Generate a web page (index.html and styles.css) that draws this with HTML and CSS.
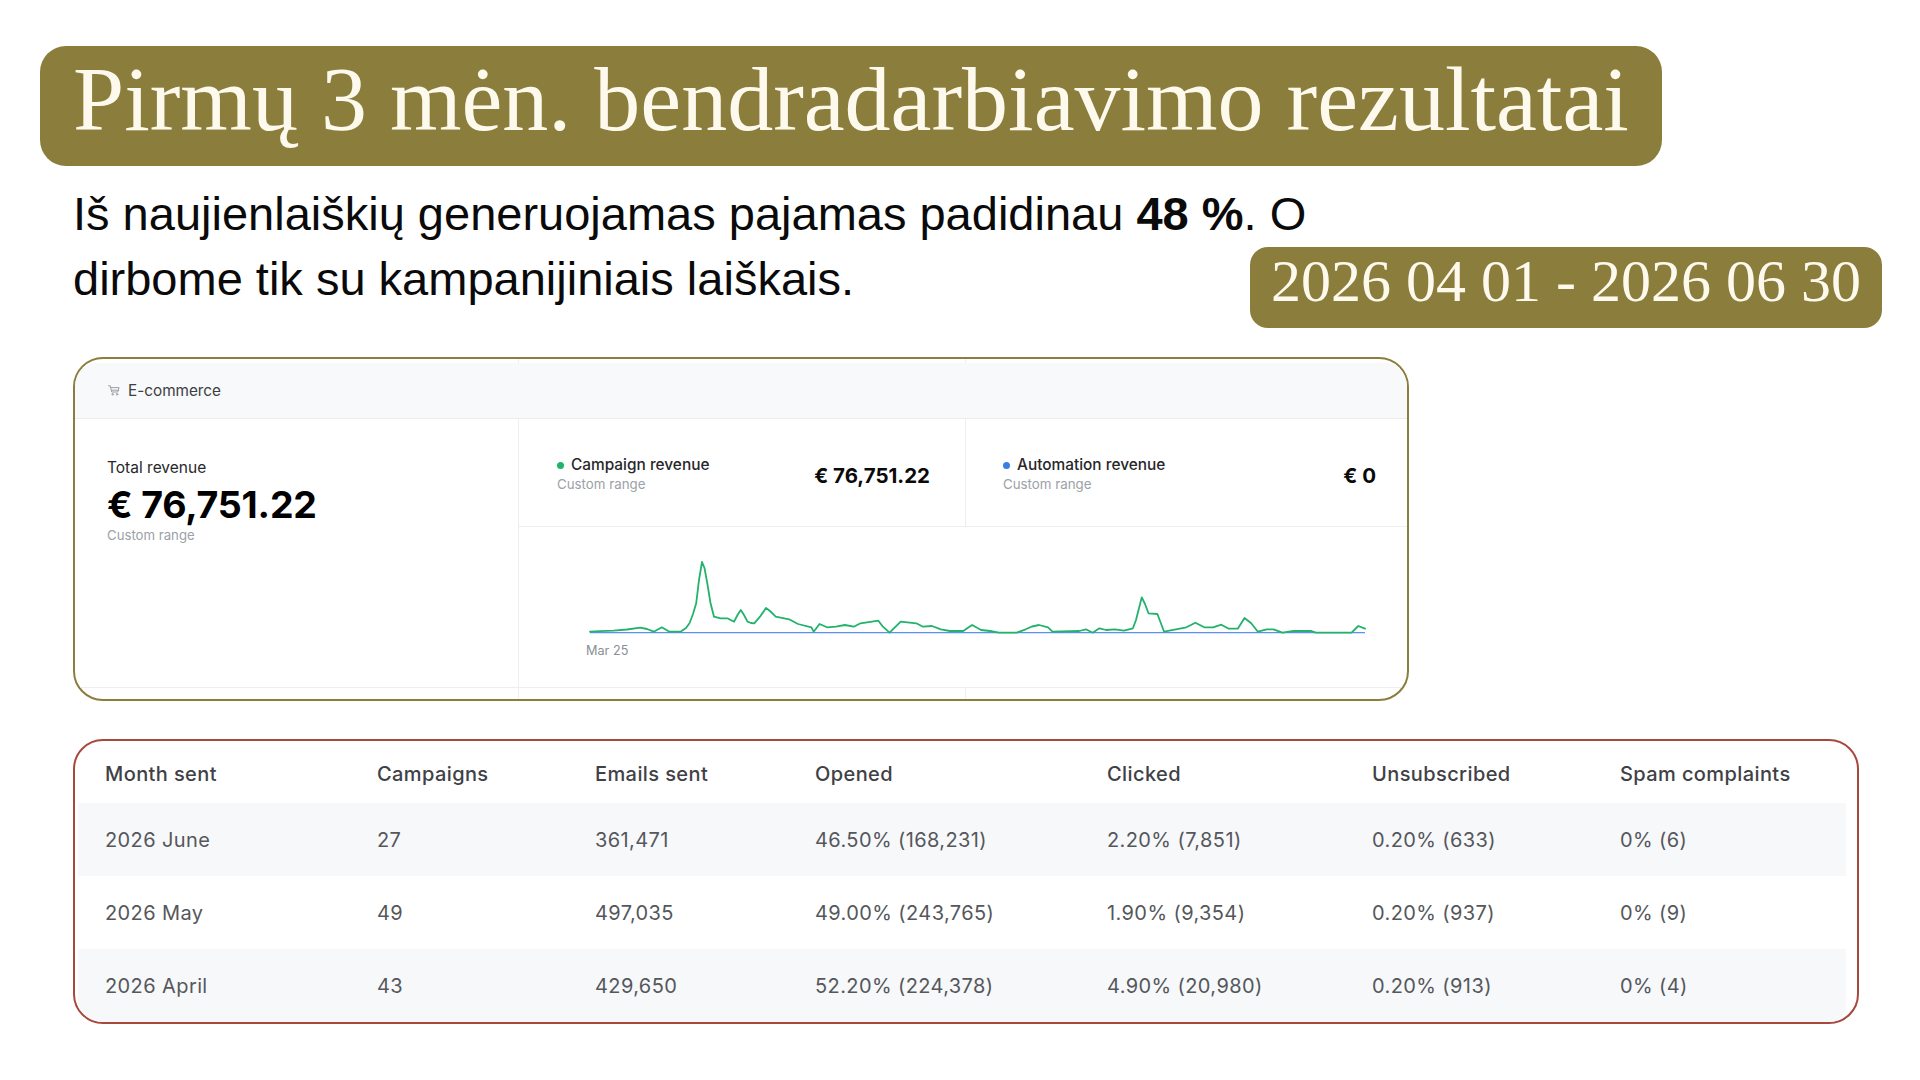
FILE: index.html
```html
<!DOCTYPE html>
<html lang="lt">
<head>
<meta charset="utf-8">
<title>Pirmų 3 mėn. bendradarbiavimo rezultatai</title>
<link rel="stylesheet" href="styles.css">
</head>
<body>
<div class="page">
  <h1 class="title">Pirmų 3 mėn. bendradarbiavimo rezultatai</h1>
  <div class="intro">
    <p class="lead"><span>Iš naujienlaiškių generuojamas pajamas padidinau <b>48&nbsp;%</b>.&nbsp;O</span><br><span>dirbome tik su kampanijiniais laiškais.</span></p>
    <div class="period">2026 04 01 - 2026 06 30</div>
  </div>

  <section class="ecom">
    <div class="strip"><span></span><span></span><span></span></div>
    <div class="ec-head">
      <svg class="cart" width="12" height="11" viewBox="0 0 12 11" fill="none" stroke="#9aa0a6" stroke-width="1" stroke-linecap="round" stroke-linejoin="round">
        <path d="M0.5 0.8h1.8l1.4 6.2h6l1.4-4.4H2.9"/>
        <path d="M3.9 5.2h6.6"/>
        <circle cx="4.6" cy="9.3" r="0.8"/>
        <circle cx="9" cy="9.3" r="0.8"/>
      </svg>
      <span>E-commerce</span>
    </div>
    <div class="ec-body">
      <div class="total">
        <div class="t-label">Total revenue</div>
        <div class="t-value">€ 76,751.22</div>
        <div class="sub">Custom range</div>
      </div>
      <div class="ec-right">
        <div class="metrics">
          <div class="metric m1">
            <div class="m-text">
              <div class="m-label"><i class="dot green"></i>Campaign revenue</div>
              <div class="sub">Custom range</div>
            </div>
            <div class="m-value">€ 76,751.22</div>
          </div>
          <div class="metric m2">
            <div class="m-text">
              <div class="m-label"><i class="dot blue"></i>Automation revenue</div>
              <div class="sub">Custom range</div>
            </div>
            <div class="m-value">€ 0</div>
          </div>
        </div>
        <div class="chart">
          <svg class="chart-svg" width="888" height="160" viewBox="519 527 888 160">
            <line x1="590" y1="632.7" x2="1365" y2="632.7" stroke="#5b8ff0" stroke-width="1.2"/>
            <polyline fill="none" stroke="#22b26c" stroke-width="1.8" stroke-linejoin="round" stroke-linecap="round"
              points="590,631.7 600,631.2 613.6,630.7 627,629.5 640.4,627.7 647,629 653.8,631.7 661.8,627.3 669.4,631.7 680.5,631.7 686,628 689.5,623.3 693,614 696.2,603.3 699,580 702,562 704.5,568 707.3,583.3 710.5,603 714,616.7 720.7,618.3 727.4,618.3 734.1,621.7 737.5,615 740.8,610 744,615 747.5,621.7 751,623 754.2,623.3 760,616.7 766,608 770,611 775.7,616.7 789.1,619.3 798,624 811.4,627.3 813.7,631.7 819.5,624 827,627.3 836,626.7 844.9,625 853.8,626.7 860.5,623.3 878.4,620.7 882.9,626.7 889.6,632.7 900.7,621.7 916.3,623.3 923,626.7 932,626 940.9,629.3 949.8,631 963.2,631 972.1,625 981.1,630 990,631 998.9,632.7 1016.8,632.7 1025.7,629.3 1032,626.5 1039.1,625 1048,627.3 1052.5,631.7 1079.3,631 1086,629.3 1092.7,632.7 1099.4,628.3 1106.1,630 1115,629.3 1123.9,630.7 1132.9,628.3 1136,620 1141.8,597.3 1145,604 1148.5,613.3 1157.4,614 1164.1,631.7 1186.4,627.3 1195.4,622.7 1204.3,627.3 1213.2,627.3 1221.3,624.7 1228.8,628.7 1237.8,628.7 1244.5,618 1251.2,623.3 1257.9,631.7 1266.8,629.3 1273.5,629.3 1282.4,632.7 1293.6,631 1311.4,631 1315.9,632.7 1351.6,632.7 1358.3,626 1365,628.7"/>
          </svg>
          <span class="axis">Mar 25</span>
        </div>
      </div>
    </div>
    <div class="strip bottom"><span></span><span></span><span></span></div>
  </section>

  <section class="stats">
    <div class="tbl">
      <div class="row head">
        <span>Month sent</span><span>Campaigns</span><span>Emails sent</span><span>Opened</span><span>Clicked</span><span>Unsubscribed</span><span>Spam complaints</span>
      </div>
      <div class="row shade">
        <span>2026 June</span><span>27</span><span>361,471</span><span>46.50% (168,231)</span><span>2.20% (7,851)</span><span>0.20% (633)</span><span>0% (6)</span>
      </div>
      <div class="row">
        <span>2026 May</span><span>49</span><span>497,035</span><span>49.00% (243,765)</span><span>1.90% (9,354)</span><span>0.20% (937)</span><span>0% (9)</span>
      </div>
      <div class="row shade">
        <span>2026 April</span><span>43</span><span>429,650</span><span>52.20% (224,378)</span><span>4.90% (20,980)</span><span>0.20% (913)</span><span>0% (4)</span>
      </div>
    </div>
  </section>
</div>
</body>
</html>
```

FILE: styles.css
```css
* { box-sizing: border-box; }

html, body {
  margin: 0;
  padding: 0;
  background: #ffffff;
}

body {
  width: 1920px;
  height: 1080px;
  overflow: hidden;
  font-family: "Liberation Sans", Arial, sans-serif;
  color: #000;
}

.page {
  display: flex;
  flex-direction: column;
  align-items: flex-start;
  padding: 46px 38px 0 40px;
}

.title {
  margin: 0;
  height: 120px;
  padding: 0 33px 14px 33px;
  background: #8b7d3c;
  color: #fdf9ec;
  border-radius: 26px;
  font-family: "Liberation Serif", "Times New Roman", serif;
  font-weight: 400;
  font-size: 92px;
  line-height: 106px;
  white-space: nowrap;
}

.intro {
  display: grid;
  grid-template-columns: 1fr auto;
  align-items: start;
  width: 100%;
  margin-top: 15px;
  padding-left: 33px;
}

.lead {
  grid-column: 1 / 3;
  grid-row: 1;
  justify-self: start;
  margin: 0;
  font-size: 47px;
  line-height: 65px;
  color: #0a0a0a;
  white-space: nowrap;
}

.lead b { font-weight: 700; }

.period {
  grid-column: 2;
  grid-row: 1;
  margin-top: 66px;
  height: 81px;
  padding: 0 21px 12px 21px;
  background: #8b7d3c;
  color: #fdf9ec;
  border-radius: 18px;
  font-family: "Liberation Serif", "Times New Roman", serif;
  font-size: 60px;
  line-height: 69px;
  white-space: nowrap;
}

/* ---------- E-commerce card ---------- */
.ecom {
  margin: 29px 0 0 33px;
  width: 1336px;
  height: 344px;
  border: 2px solid #8b7d3c;
  border-radius: 30px;
  overflow: hidden;
  display: flex;
  flex-direction: column;
  font-family: Inter, "Noto Sans", sans-serif;
  background: #fff;
}

.strip {
  display: grid;
  grid-template-columns: 444px 447px 1fr;
  height: 4px;
  flex: none;
}

.strip span { border-right: 1px solid #eceef1; }
.strip span:last-child { border-right: 0; }

.strip.bottom {
  flex: 1;
  height: auto;
  border-top: 1px solid #eceef1;
}

.ec-head {
  height: 56px;
  flex: none;
  display: flex;
  align-items: center;
  gap: 8px;
  padding-left: 33px;
  background: #f8f9fa;
  border-bottom: 1px solid #eaecef;
  font-size: 15.3px;
  color: #3c4043;
}

.cart { display: block; }

.ec-body {
  display: grid;
  grid-template-columns: 444px 1fr;
  height: 268px;
  flex: none;
}

.total {
  border-right: 1px solid #eceef1;
  padding: 39px 0 0 32px;
}

.t-label {
  font-size: 15.5px;
  line-height: 20px;
  color: #27272a;
}

.t-value {
  margin-top: 7px;
  font-size: 37.5px;
  line-height: 40px;
  font-weight: 700;
  color: #000;
  letter-spacing: -0.2px;
}

.sub {
  margin-top: 2px;
  font-size: 13.2px;
  line-height: 16px;
  color: #9ca1a8;
}

.ec-right {
  display: flex;
  flex-direction: column;
}

.metrics {
  display: grid;
  grid-template-columns: 447px 1fr;
  height: 108px;
  border-bottom: 1px solid #eceef1;
}

.metric {
  display: flex;
  justify-content: space-between;
  align-items: flex-start;
}

.m1 {
  border-right: 1px solid #eceef1;
  padding: 36px 35px 0 38px;
}

.m2 { padding: 36px 31px 0 37px; }

.m-label {
  display: flex;
  align-items: center;
  font-size: 15.4px;
  line-height: 20px;
  font-weight: 500;
  color: #27272a;
}

.m-text .sub { margin-top: 1px; font-size: 13.3px; }

.dot {
  width: 7px;
  height: 7px;
  border-radius: 50%;
  margin-right: 7px;
}

.dot.green { background: #1fb468; }
.dot.blue { background: #3b7ee6; }

.m-value {
  margin-top: 9px;
  font-size: 20.5px;
  line-height: 24px;
  font-weight: 700;
  color: #0a0a0a;
}

.chart {
  flex: 1;
  position: relative;
}

.chart-svg { display: block; }

.axis {
  position: absolute;
  left: 67px;
  top: 117px;
  font-size: 12.7px;
  line-height: 14px;
  color: #8a8f96;
}

/* ---------- Stats table ---------- */
.stats {
  margin: 38px 0 0 33px;
  width: 1786px;
  height: 285px;
  border: 2px solid #a8473c;
  border-radius: 30px;
  overflow: hidden;
  font-family: Inter, "Noto Sans", sans-serif;
}

.tbl {
  margin: 0 11px 0 3px;
  border-radius: 16px;
  overflow: hidden;
}

.row {
  display: grid;
  grid-template-columns: 272px 218px 220px 292px 265px 248px 1fr;
  align-items: center;
  padding-left: 27px;
  height: 73px;
  font-size: 20px;
  letter-spacing: 0.4px;
  color: #55575c;
}

.row.head {
  height: 62px;
  padding-top: 4px;
  font-weight: 500;
  color: #3f4146;
}

.row.shade { background: #f7f8fa; }
```
